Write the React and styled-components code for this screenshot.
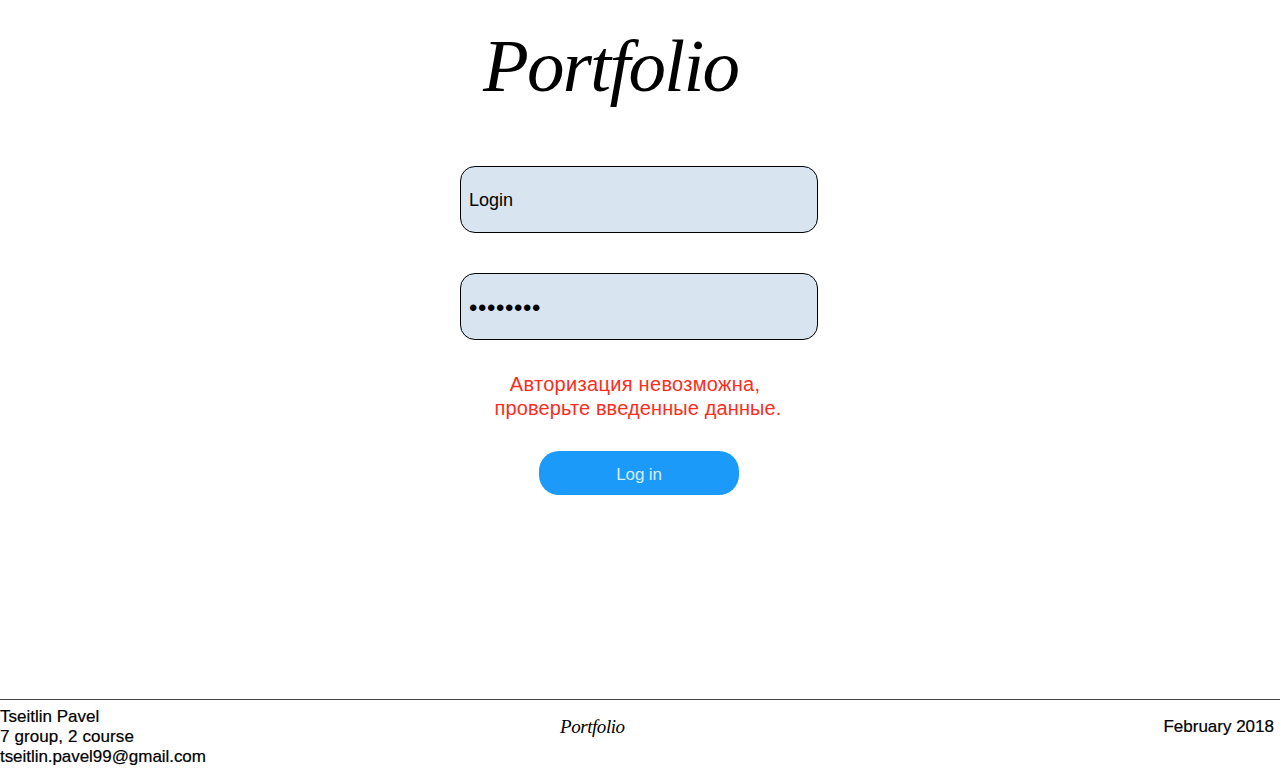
import React from "react";
import styled, { createGlobalStyle } from "styled-components";

const GlobalStyle = createGlobalStyle`
  * { box-sizing: border-box; }
  body { margin: 0; background: #fff; color: #000; font-family: "Liberation Sans", Arial, sans-serif; }
`;

const Page = styled.div`
  height: 768px;
  display: flex;
  flex-direction: column;
  overflow: hidden;
`;

const Header = styled.header`
  height: 166px;
  padding: 17px 0 0 483px;
`;

const Wordmark = styled.div`
  margin: 0;
  font-family: "Liberation Serif", serif;
  font-style: italic;
  font-weight: 400;
  font-size: ${(p) => p.$size}px;
  letter-spacing: -0.023em;
  line-height: 1.3;
  white-space: nowrap;
`;

const Form = styled.form`
  flex: 1;
  display: flex;
  flex-direction: column;
  align-items: flex-start;
  padding-left: 460px;
`;

const Field = styled.input`
  width: 358px;
  height: 67px;
  margin: 0 0 40px;
  padding: 2px 8px 0;
  border: 1px solid #000;
  border-radius: 15px;
  background: #d8e4f0;
  color: #000;
  outline: none;
  font-family: "Liberation Sans", Arial, sans-serif;
  font-size: 18px;
`;

const PasswordField = styled(Field)`
  font-size: 24px;
  letter-spacing: 0.6px;
`;

const ErrorText = styled.div`
  width: 356px;
  margin-top: -8px;
  text-align: center;
  color: #fc2d20;
  font-size: 20px;
  line-height: 24px;
`;

const Line = styled.div`
  white-space: pre;
  letter-spacing: ${(p) => p.$spacing || 0}px;
`;

const Submit = styled.button`
  width: 200px;
  height: 44px;
  margin: 31px 0 0 79px;
  padding: 3px 0 0;
  border: 0;
  border-radius: 20px;
  background: #1b9af9;
  color: #d8edff;
  font-family: "Liberation Sans", Arial, sans-serif;
  font-size: 17px;
  letter-spacing: -0.15px;
`;

const Footer = styled.footer`
  height: 69px;
  border-top: 1px solid #444;
  display: grid;
  grid-template-columns: 560px 1fr auto;
  font-size: 17px;
  line-height: 20px;
  -webkit-text-stroke: 0.2px #000;
`;

const Author = styled.address`
  font-style: normal;
  padding-top: 7px;
`;

const FooterLogo = styled.div`
  padding-top: 15px;
  -webkit-text-stroke: 0;
`;

const DateText = styled.div`
  padding: 17px 6px 0 0;
`;

export default function App() {
  return (
    <Page>
      <GlobalStyle />
      <Header>
        <Wordmark as="h1" $size={75}>Portfolio</Wordmark>
      </Header>
      <Form onSubmit={(e) => e.preventDefault()}>
        <Field type="text" defaultValue="Login" />
        <PasswordField type="password" defaultValue="password" />
        <ErrorText>
          <Line $spacing={0.3}>{"Авторизация невозможна, "}</Line>
          <Line $spacing={0.12}>проверьте введенные данные.</Line>
        </ErrorText>
        <Submit type="submit">Log in</Submit>
      </Form>
      <Footer>
        <Author>
          <Line>Tseitlin Pavel</Line>
          <Line $spacing={0.1}>7 group, 2 course</Line>
          <Line $spacing={-0.05}>tseitlin.pavel99@gmail.com</Line>
        </Author>
        <FooterLogo><Wordmark $size={19}>Portfolio</Wordmark></FooterLogo>
        <DateText>February 2018</DateText>
      </Footer>
    </Page>
  );
}
